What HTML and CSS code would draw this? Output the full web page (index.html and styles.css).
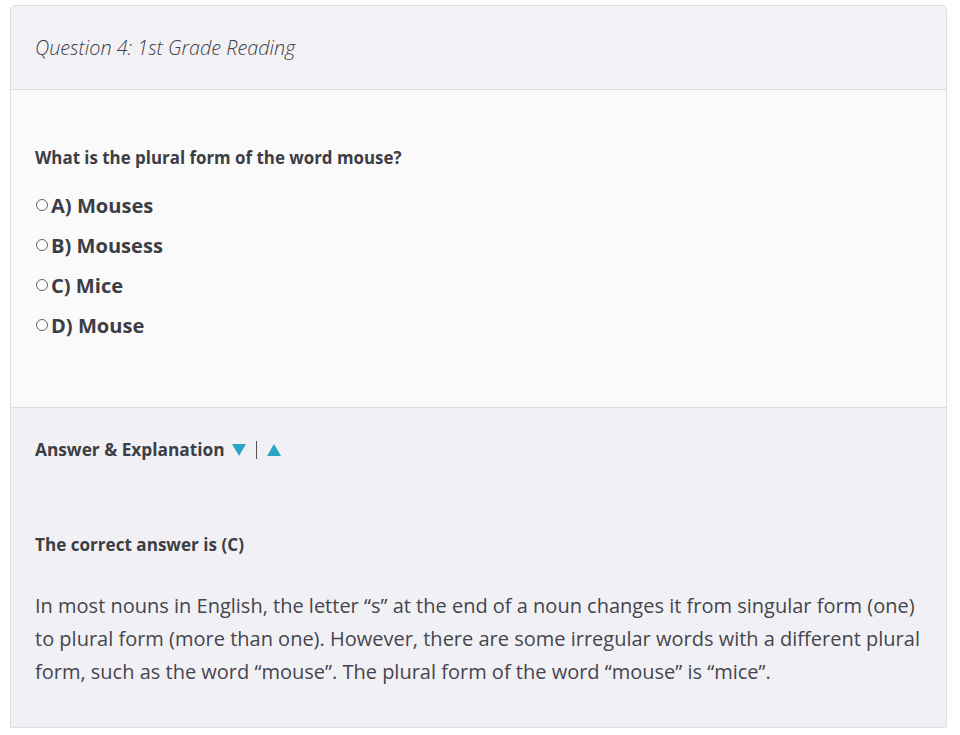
FILE: index.html
```html
<!DOCTYPE html>
<html>
<head>
<meta charset="utf-8">
<link rel="stylesheet" href="styles.css">
</head>
<body>
<div class="card">
  <div class="card-header">Question 4: 1st Grade Reading</div>
  <div class="card-body">
    <p class="question">What is the plural form of the word mouse?</p>
    <ul class="options">
      <li><span class="radio"></span>A) Mouses</li>
      <li><span class="radio"></span>B) Mousess</li>
      <li><span class="radio"></span>C) Mice</li>
      <li><span class="radio"></span>D) Mouse</li>
    </ul>
  </div>
  <div class="card-footer">
    <div class="toggle">Answer &amp; Explanation
      <span class="tri tri-down"></span><span class="sep"></span><span class="tri tri-up"></span>
    </div>
    <p class="correct">The correct answer is (C)</p>
    <p class="explain">In most nouns in English, the letter “s” at the end of a noun changes it from singular form (one) to plural form (more than one). However, there are some irregular words with a different plural form, such as the word “mouse”. The plural form of the word “mouse” is “mice”.</p>
  </div>
</div>
</body>
</html>
```
FILE: styles.css
```css
html, body {
  margin: 0;
  padding: 0;
  background: #ffffff;
}
body {
  padding: 5px 13px 0 10px;
  font-family: "Open Sans", "Noto Sans", sans-serif;
  color: #3d3d45;
}
.card {
  border: 1px solid #dedee2;
  border-radius: 5px 5px 0 0;
  overflow: hidden;
}
.card-header {
  background: #f2f2f6;
  height: 84px;
  box-sizing: border-box;
  padding: 0 24px;
  display: flex;
  align-items: center;
  font-style: italic;
  font-weight: 300;
  font-size: 19.8px;
  color: #3f3f47;
  border-bottom: 1px solid #dcdce0;
}
.card-body {
  background: #fafafa;
  padding: 57px 24px 0;
  height: 318px;
  box-sizing: border-box;
  border-bottom: 1px solid #dcdce0;
}
.question {
  margin: 0 0 16px;
  font-weight: 700;
  font-size: 16.9px;
  line-height: 22px;
}
.options {
  list-style: none;
  margin: 0;
  padding: 0;
}
.options li {
  display: flex;
  align-items: center;
  height: 40px;
  font-weight: 700;
  font-size: 20.1px;
}
.radio {
  width: 12px;
  height: 12px;
  border: 1px solid #666;
  border-radius: 50%;
  box-sizing: border-box;
  margin: 0 3px 0 1px;
}
.card-footer {
  background: #f1f1f5;
  padding: 30px 20px 39px 24px;
}
.toggle {
  display: flex;
  align-items: center;
  font-weight: 700;
  font-size: 17.3px;
  line-height: 24px;
}
.tri {
  width: 0;
  height: 0;
  border-left: 7.5px solid transparent;
  border-right: 7.5px solid transparent;
}
.tri-down {
  border-top: 12px solid #2aa5c6;
  margin-left: 7px;
}
.tri-up {
  border-bottom: 12px solid #2aa5c6;
}
.sep {
  width: 1px;
  height: 18px;
  background: #555;
  margin: 0 10px;
}
.correct {
  margin: 72px 0 0;
  font-weight: 700;
  font-size: 17.1px;
  line-height: 22px;
}
.explain {
  margin: 33px 0 0;
  font-size: 20px;
  font-weight: 400;
  line-height: 33px;
  color: #45454d;
}
```
